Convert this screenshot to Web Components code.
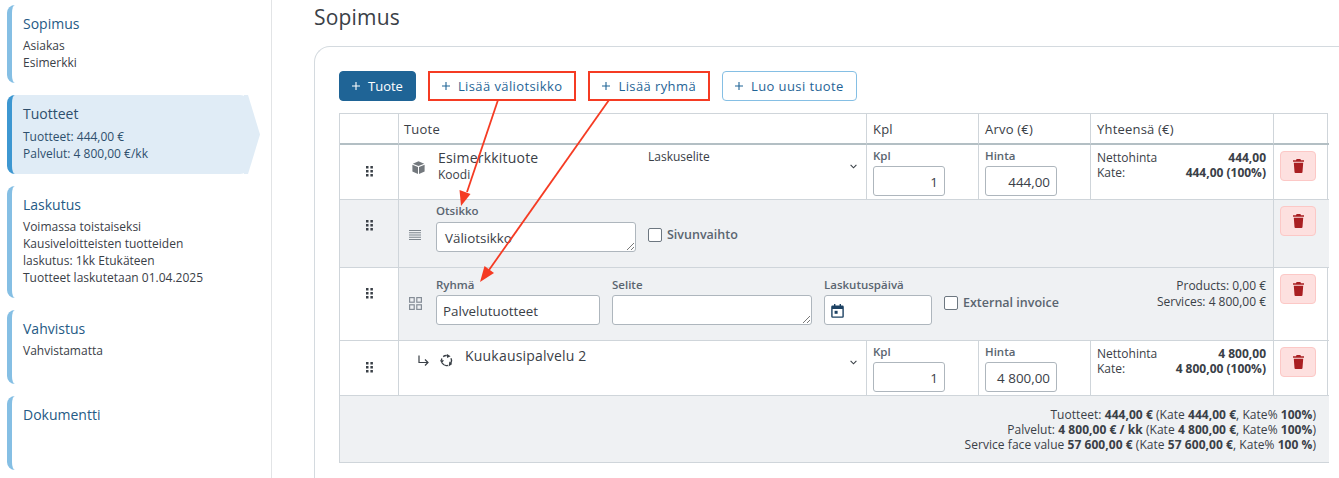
<!DOCTYPE html>
<html lang="fi">
<head>
<meta charset="utf-8">
<title>Sopimus</title>
<style>
    html, body { margin: 0; height: 100%; overflow: hidden; background: #fff; }
    body { font-family: "Open Sans", "Liberation Sans", sans-serif; font-size: 12px; color: #3a4047; }
</style>
</head>
<body>
<contract-page></contract-page>

<script>
/* Shared icons, all drawn on small viewBoxes */
const ICONS = {
    drag: `<svg width="7" height="11" viewBox="0 0 7 11" fill="#3a4047"><rect x="0" y="0" width="2.5" height="2.5"/><rect x="4.4" y="0" width="2.5" height="2.5"/><rect x="0" y="4" width="2.5" height="2.5"/><rect x="4.4" y="4" width="2.5" height="2.5"/><rect x="0" y="8" width="2.5" height="2.5"/><rect x="4.4" y="8" width="2.5" height="2.5"/></svg>`,
    cube: `<svg width="13" height="13" viewBox="0 0 13 13" fill="#73787d"><path d="M6.5 0.3 12.2 2.7 6.5 5.1 0.8 2.7z"/><path d="M0.4 3.7 6 6.1V12.9L0.4 10.4z"/><path d="M12.6 3.7 7 6.1V12.9L12.6 10.4z"/></svg>`,
    lines: `<svg width="12" height="10" viewBox="0 0 12 10" fill="#7d858d"><rect y="0" width="12" height="1"/><rect y="2.25" width="12" height="1"/><rect y="4.5" width="12" height="1"/><rect y="6.75" width="12" height="1"/><rect y="9" width="12" height="1"/></svg>`,
    grid: `<svg width="13" height="13" viewBox="0 0 13 13" fill="none" stroke="#858d96" stroke-width="1.2"><rect x="0.6" y="0.6" width="4.6" height="4.6"/><rect x="7.8" y="0.6" width="4.6" height="4.6"/><rect x="0.6" y="7.8" width="4.6" height="4.6"/><rect x="7.8" y="7.8" width="4.6" height="4.6"/></svg>`,
    turn: `<svg width="11" height="11" viewBox="0 0 11 11" fill="none" stroke="#3a4047" stroke-width="1.2"><path d="M1 0.5V7.5H10"/><path d="M7 4.5 10 7.5 7 10.5"/></svg>`,
    cycle: `<svg width="13" height="13" viewBox="0 0 13 13" fill="none" stroke="#3a4047" stroke-width="1.4"><path d="M3.2 2.6A5 5 0 0 1 6.8 1.5"/><path d="M10.9 4.2A5 5 0 0 1 10.4 9.6"/><path d="M8 11.3A5 5 0 0 1 2.2 9"/><path d="M1.5 6.5A5 5 0 0 1 1.9 4.6"/><path fill="#3a4047" stroke="none" d="M7 0 10.6 2.2 7 4zM0 6.2H4L1.8 9.6zM9.4 7.6 12.2 10 8.6 12.6z"/></svg>`,
    chevron: `<svg width="7" height="5" viewBox="0 0 7 5" fill="none" stroke="#3a4047" stroke-width="1.1"><path d="M0.6 0.8 3.5 3.8 6.4 0.8"/></svg>`,
    calendar: `<svg width="13" height="14" viewBox="0 0 13 14" fill="#1d4263"><path fill-rule="evenodd" d="M3 0H4.4V1.5H8.6V0H10V1.5H11.4A1.4 1.4 0 0 1 12.8 2.9V12.4A1.4 1.4 0 0 1 11.4 13.8H1.6A1.4 1.4 0 0 1 .2 12.4V2.9A1.4 1.4 0 0 1 1.6 1.5H3ZM1.6 5V12.4H11.4V5Z"/><rect x="3.6" y="6.8" width="3" height="3"/></svg>`,
    trash: `<svg width="11" height="14" viewBox="0 0 11 14" fill="#a91f22"><path d="M3.6 0H7.4L8 1.2H11V2.8H0V1.2H3Z"/><path d="M.8 3.7H10.2L9.5 13A1 1 0 0 1 8.5 14H2.5A1 1 0 0 1 1.5 13Z"/></svg>`
};

/* One step of the left navigation */
class StepItem extends HTMLElement {
    constructor() {
        super();
        this.attachShadow({ mode: "open" });
    }
    connectedCallback() {
        this.shadowRoot.innerHTML = `
            <style>
                :host {
                    display: block;
                    position: relative;
                    box-sizing: border-box;
                    height: var(--h);
                    width: 241px;
                    padding: 9px 10px 0 11px;
                    border-left: 5px solid #85bfe4;
                    border-radius: 8px;
                    line-height: 17px;
                    color: #3a4047;
                }
                .title { font-size: 14px; line-height: 20px; color: #255a85; margin-bottom: 3px; }
                :host([active]) { background: #e0ecf6; border-left-color: #3d97d1; color: #2e4f6d; }
                :host([active]) .title { color: #2e4f6d; margin-bottom: 4px; }
                :host([active])::after {
                    content: "";
                    position: absolute;
                    left: 100%;
                    top: 0;
                    bottom: 0;
                    margin-left: -4px;
                    width: 16px;
                    background: #e0ecf6;
                    clip-path: polygon(0 0, 25% 0, 100% 50%, 25% 100%, 0 100%);
                }
            </style>
            <div class="title">${this.getAttribute("label")}</div>
            <slot></slot>
        `;
    }
}

/* Toolbar button, "primary" is the filled one, "marked" has the red annotation box */
class ActionButton extends HTMLElement {
    constructor() {
        super();
        this.attachShadow({ mode: "open" });
    }
    connectedCallback() {
        this.shadowRoot.innerHTML = `
            <style>
                :host {
                    display: inline-flex;
                    align-items: center;
                    box-sizing: border-box;
                    height: 30px;
                    padding: 0 12px;
                    gap: 8px;
                    border: 1px solid #85bfe4;
                    border-radius: 4px;
                    color: #1f6496;
                    font-size: 13px;
                    letter-spacing: 0.4px;
                }
                :host([primary]) { background: #1f6496; border-color: #1f6496; color: #fff; letter-spacing: 0; }
                :host([marked]) { border: 2px solid #f53b23; border-radius: 0; }
                svg { display: block; }
            </style>
            <svg width="8" height="8" viewBox="0 0 8 8" stroke="currentColor" stroke-width="1.1"><path d="M4 0V8M0 4H8"/></svg>
            <span><slot></slot></span>
        `;
    }
}

/* Label plus text input or textarea look-alike */
class FormField extends HTMLElement {
    constructor() {
        super();
        this.attachShadow({ mode: "open" });
    }
    connectedCallback() {
        const width = this.getAttribute("width");
        const number = this.hasAttribute("number");
        const textarea = this.hasAttribute("textarea");
        const grip = textarea
            ? `<svg class="grip" width="8" height="8" viewBox="0 0 8 8" stroke="#555" stroke-width="0.8"><path d="M1 8 8 1M5 8 8 5"/></svg>`
            : "";
        this.shadowRoot.innerHTML = `
            <style>
                :host { display: block; width: ${width}px; }
                label {
                    display: block;
                    height: 11px;
                    margin-bottom: 5px;
                    font-size: 11.5px;
                    line-height: var(--label-lh, 11px);
                    font-weight: 600;
                    color: #5a6570;
                    white-space: nowrap;
                }
                .box {
                    position: relative;
                    box-sizing: border-box;
                    display: flex;
                    align-items: center;
                    height: 30px;
                    padding: 1px ${textarea ? "8px" : "6px"} 0;
                    border: 1px solid #aeb6bd;
                    border-radius: 3px;
                    background: #fff;
                    font-size: 13.4px;
                    color: #3a4047;
                    justify-content: ${number ? "flex-end" : "flex-start"};
                }
                .grip { position: absolute; right: 1px; bottom: 1px; }
                svg { display: block; }
            </style>
            <label>${this.getAttribute("label")}</label>
            <div class="box"><slot></slot>${grip}</div>
        `;
    }
}

/* Checkbox with a bold caption */
class CheckField extends HTMLElement {
    constructor() {
        super();
        this.attachShadow({ mode: "open" });
    }
    connectedCallback() {
        this.shadowRoot.innerHTML = `
            <style>
                :host { display: flex; align-items: center; gap: 5px; font-size: 12.5px; font-weight: 600; color: #5a6570; white-space: nowrap; }
                i { display: block; box-sizing: border-box; width: 14px; height: 14px; border: 1px solid #6d7780; border-radius: 2px; background: #fff; }
            </style>
            <i></i><slot></slot>
        `;
    }
}

/* Small pink delete button */
class DeleteButton extends HTMLElement {
    constructor() {
        super();
        this.attachShadow({ mode: "open" });
    }
    connectedCallback() {
        this.shadowRoot.innerHTML = `
            <style>
                :host {
                    display: flex;
                    align-items: center;
                    justify-content: center;
                    box-sizing: border-box;
                    width: 36px;
                    height: 30px;
                    border: 1px solid #fcc8c6;
                    border-radius: 4px;
                    background: #fde0df;
                }
                svg { display: block; }
            </style>
            ${ICONS.trash}
        `;
    }
}

/* Inline icon by name */
class LineIcon extends HTMLElement {
    constructor() {
        super();
        this.attachShadow({ mode: "open" });
    }
    connectedCallback() {
        this.shadowRoot.innerHTML = `
            <style>
                :host { display: block; line-height: 0; }
                svg { display: block; }
            </style>
            ${ICONS[this.getAttribute("name")]}
        `;
    }
}

/* Net price and margin lines in the Yhteensä column */
class SumCell extends HTMLElement {
    constructor() {
        super();
        this.attachShadow({ mode: "open" });
    }
    connectedCallback() {
        this.shadowRoot.innerHTML = `
            <style>
                :host {
                    display: grid;
                    grid-template-columns: auto 1fr;
                    padding: 5px 7px 0 6px;
                    font-size: 12px;
                    line-height: 15px;
                    color: #3a4047;
                }
                b { font-weight: 700; text-align: right; white-space: nowrap; }
            </style>
            <span>Nettohinta</span><b>${this.getAttribute("net")}</b>
            <span>Kate:</span><b>${this.getAttribute("margin")}</b>
        `;
    }
}

/* The product table, built as a grid so rows can span columns */
class LineTable extends HTMLElement {
    constructor() {
        super();
        this.attachShadow({ mode: "open" });
    }
    connectedCallback() {
        this.shadowRoot.innerHTML = `
            <style>
                :host {
                    display: grid;
                    grid-template-columns: 59px 468px 112px 112px 183px 55px;
                    grid-template-rows: 31px 55px 68px 73px 55px 67px;
                    box-sizing: border-box;
                    width: 989px;
                    margin-top: 12px;
                    border: solid #cfd5da;
                    border-width: 1px 1px 0 1px;
                    color: #3a4047;
                }
                .c { box-sizing: border-box; border-right: 1px solid #cfd5da; border-bottom: 1px solid #cfd5da; min-width: 0; }
                .c.last { border-right: 0; }
                .head { font-size: 13px; line-height: 30px; padding-left: 6px; border-bottom: 2px solid #b3bfc4; color: #3a4047; letter-spacing: 0.2px; }
                .grey { background: #eff1f3; }
                .drag { display: flex; justify-content: center; padding-top: 21px; }
                .del { padding: 6px 0 0 6px; }
                .field { padding: 5px 6px 0 6px; }
                .product { position: relative; display: flex; }
                .main { display: flex; padding-left: 13px; }
                .names { margin-left: 13px; margin-top: 3px; }
                .name { font-size: 14px; line-height: 20px; letter-spacing: 0.2px; }
                .code { font-size: 12px; line-height: 13px; }
                .desc { position: absolute; left: 249px; top: 4px; font-size: 12px; line-height: 15px; }
                .chev { position: absolute; right: 9px; top: 19px; }
                .sub { display: flex; align-items: flex-start; padding-left: 37px; padding-top: 6px; }
                .kind { position: absolute; }
                .totals {
                    grid-column: 1 / -1;
                    border-right: 0;
                    padding: 11px 13px 0 0;
                    text-align: right;
                    font-size: 12px;
                    line-height: 15px;
                    letter-spacing: 0.05px;
                    color: #3a4047;
                }
                .totals b { font-weight: 700; }
                .span4 { grid-column: span 4; position: relative; }
                .sums { position: absolute; right: 7px; top: 10px; text-align: right; line-height: 16px; font-size: 12px; }
            </style>

            <div class="c head"></div>
            <div class="c head" style="padding-left:5px">Tuote</div>
            <div class="c head">Kpl</div>
            <div class="c head">Arvo (€)</div>
            <div class="c head">Yhteensä (€)</div>
            <div class="c head last"></div>

            <div class="c drag"><line-icon name="drag"></line-icon></div>
            <div class="c product">
                <div class="main">
                    <line-icon name="cube" style="margin-top:16px"></line-icon>
                    <div class="names">
                        <div class="name">Esimerkkituote</div>
                        <div class="code">Koodi</div>
                    </div>
                </div>
                <div class="desc">Laskuselite</div>
                <line-icon class="chev" name="chevron"></line-icon>
            </div>
            <div class="c field"><form-field label="Kpl" width="72" number>1</form-field></div>
            <div class="c field"><form-field label="Hinta" width="72" number>444,00</form-field></div>
            <div class="c"><sum-cell net="444,00" margin="444,00 (100%)"></sum-cell></div>
            <div class="c del last"><delete-button></delete-button></div>

            <div class="c drag grey" style="padding-top:20px"><line-icon name="drag"></line-icon></div>
            <div class="c span4 grey sub">
                <line-icon class="kind" name="lines" style="left:10px;top:30px"></line-icon>
                <form-field label="Otsikko" width="200" textarea style="--label-lh:9px">Väliotsikko</form-field>
                <check-field style="margin:20px 0 0 12px">Sivunvaihto</check-field>
            </div>
            <div class="c del last grey"><delete-button></delete-button></div>

            <div class="c drag" style="padding-top:20px"><line-icon name="drag"></line-icon></div>
            <div class="c span4 grey sub" style="padding-top:11px">
                <line-icon class="kind" name="grid" style="left:10px;top:29px"></line-icon>
                <form-field label="Ryhmä" width="164">Palvelutuotteet</form-field>
                <form-field label="Selite" width="200" textarea style="margin-left:12px"></form-field>
                <form-field label="Laskutuspäivä" width="108" style="margin-left:12px"><line-icon name="calendar"></line-icon></form-field>
                <check-field style="margin:15px 0 0 12px">External invoice</check-field>
                <div class="sums">Products: 0,00 €<br>Services: 4 800,00 €</div>
            </div>
            <div class="c del last"><delete-button></delete-button></div>

            <div class="c drag"><line-icon name="drag"></line-icon></div>
            <div class="c product">
                <div class="main" style="padding-left:19px">
                    <line-icon name="turn" style="margin-top:14px"></line-icon>
                    <line-icon name="cycle" style="margin:13px 0 0 11px"></line-icon>
                    <div class="names" style="margin:5px 0 0 12px"><div class="name">Kuukausipalvelu 2</div></div>
                </div>
                <line-icon class="chev" name="chevron"></line-icon>
            </div>
            <div class="c field"><form-field label="Kpl" width="72" number>1</form-field></div>
            <div class="c field"><form-field label="Hinta" width="72" number>4 800,00</form-field></div>
            <div class="c"><sum-cell net="4 800,00" margin="4 800,00 (100%)"></sum-cell></div>
            <div class="c del last"><delete-button></delete-button></div>

            <div class="c totals grey">
                Tuotteet: <b>444,00 €</b> (Kate <b>444,00 €</b>, Kate% <b>100%</b>)<br>
                Palvelut: <b>4 800,00 € / kk</b> (Kate <b>4 800,00 €</b>, Kate% <b>100%</b>)<br>
                Service face value <b>57 600,00 €</b> (Kate <b>57 600,00 €</b>, Kate% <b>100 %</b>)
            </div>
        `;
    }
}

/* Whole page: navigation on the left, contract card on the right */
class ContractPage extends HTMLElement {
    constructor() {
        super();
        this.attachShadow({ mode: "open" });
    }
    connectedCallback() {
        this.shadowRoot.innerHTML = `
            <style>
                :host { display: flex; position: relative; width: 1339px; height: 478px; overflow: hidden; }
                nav {
                    box-sizing: border-box;
                    flex: 0 0 272px;
                    padding: 5px 0 0 7px;
                    display: flex;
                    flex-direction: column;
                    gap: 12px;
                    border-right: 1px solid #e2e4e6;
                }
                main { flex: 1; min-width: 0; padding-left: 42px; }
                h1 { margin: 0; height: 46px; font-size: 21px; font-weight: 400; line-height: 35px; color: #3a4047; letter-spacing: 0.2px; }
                .card {
                    box-sizing: border-box;
                    width: 1060px;
                    height: 440px;
                    padding: 24px;
                    border: 1px solid #d4dadf;
                    border-right: 0;
                    border-radius: 16px 0 0 0;
                }
                .tools { display: flex; gap: 12px; }
                svg.notes { position: absolute; left: 0; top: 0; pointer-events: none; }
            </style>
            <nav>
                <step-item label="Sopimus" style="--h:78px">Asiakas<br>Esimerkki</step-item>
                <step-item label="Tuotteet" active style="--h:79px">Tuotteet: 444,00 €<br>Palvelut: 4 800,00 €/kk</step-item>
                <step-item label="Laskutus" style="--h:112px">Voimassa toistaiseksi<br>Kausiveloitteisten tuotteiden<br>laskutus: 1kk Etukäteen<br>Tuotteet laskutetaan 01.04.2025</step-item>
                <step-item label="Vahvistus" style="--h:74px">Vahvistamatta</step-item>
                <step-item label="Dokumentti" style="--h:74px"></step-item>
            </nav>
            <main>
                <h1>Sopimus</h1>
                <div class="card">
                    <div class="tools">
                        <action-button primary>Tuote</action-button>
                        <action-button marked>Lisää väliotsikko</action-button>
                        <action-button marked>Lisää ryhmä</action-button>
                        <action-button>Luo uusi tuote</action-button>
                    </div>
                    <line-table></line-table>
                </div>
            </main>
            <svg class="notes" width="1339" height="478" viewBox="0 0 1339 478" fill="#f53b23" stroke="none">
                <path d="M498 100 467 192" stroke="#f53b23" stroke-width="1.8" fill="none"/>
                <path d="M461 206 459.5 190 470.5 194z"/>
                <path d="M609 100 489 270" stroke="#f53b23" stroke-width="1.8" fill="none"/>
                <path d="M480 282 484.5 266 494 273z"/>
            </svg>
        `;
    }
}

customElements.define("step-item", StepItem);
customElements.define("action-button", ActionButton);
customElements.define("form-field", FormField);
customElements.define("check-field", CheckField);
customElements.define("delete-button", DeleteButton);
customElements.define("line-icon", LineIcon);
customElements.define("sum-cell", SumCell);
customElements.define("line-table", LineTable);
customElements.define("contract-page", ContractPage);
</script>
</body>
</html>
